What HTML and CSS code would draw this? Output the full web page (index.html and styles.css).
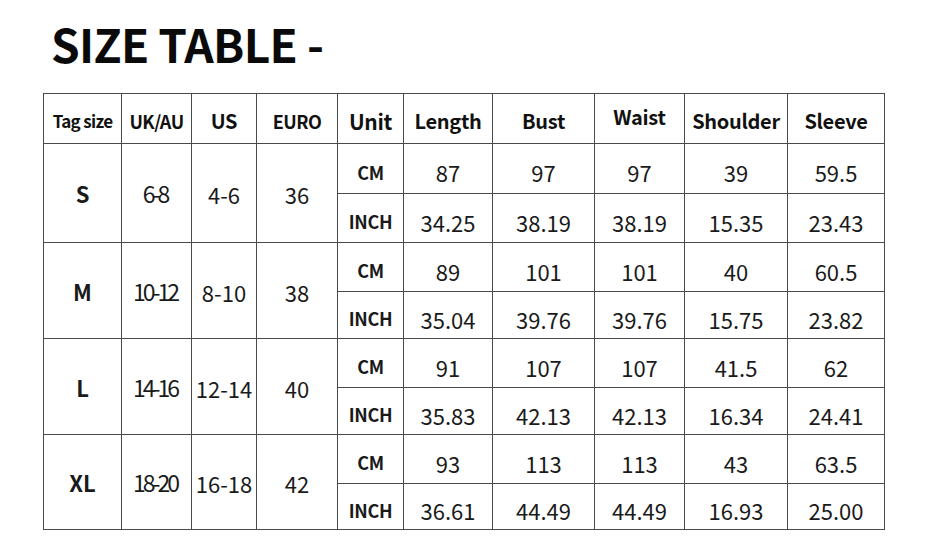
FILE: index.html
```html
<!DOCTYPE html>
<html>
<head>
<meta charset="utf-8">
<link rel="stylesheet" href="styles.css">
</head>
<body>
<h1 class="title">SIZE TABLE -</h1>
<table class="size-table">
  <colgroup>
    <col class="c-tag"><col class="c-uk"><col class="c-us"><col class="c-euro"><col class="c-unit">
    <col class="c-len"><col class="c-bust"><col class="c-waist"><col class="c-sh"><col class="c-sl">
  </colgroup>
  <thead>
    <tr class="r-head">
      <th class="h-tag">Tag size</th>
      <th class="h-sm">UK/AU</th>
      <th>US</th>
      <th class="h-sm">EURO</th>
      <th class="h-unit">Unit</th>
      <th>Length</th>
      <th>Bust</th>
      <th class="h-up">Waist</th>
      <th>Shoulder</th>
      <th>Sleeve</th>
    </tr>
  </thead>
  <tbody>
    <tr class="r1">
      <td rowspan="2" class="size">S</td>
      <td rowspan="2" class="uk">6-8</td>
      <td rowspan="2" class="mid">4-6</td>
      <td rowspan="2" class="mid">36</td>
      <td class="unit">CM</td>
      <td>87</td><td>97</td><td>97</td><td>39</td><td>59.5</td>
    </tr>
    <tr class="r2">
      <td class="unit">INCH</td>
      <td>34.25</td><td>38.19</td><td>38.19</td><td>15.35</td><td>23.43</td>
    </tr>
    <tr class="r3">
      <td rowspan="2" class="size">M</td>
      <td rowspan="2" class="uk">10-12</td>
      <td rowspan="2" class="mid">8-10</td>
      <td rowspan="2" class="mid">38</td>
      <td class="unit">CM</td>
      <td>89</td><td>101</td><td>101</td><td>40</td><td>60.5</td>
    </tr>
    <tr class="r4">
      <td class="unit">INCH</td>
      <td>35.04</td><td>39.76</td><td>39.76</td><td>15.75</td><td>23.82</td>
    </tr>
    <tr class="r3">
      <td rowspan="2" class="size">L</td>
      <td rowspan="2" class="uk">14-16</td>
      <td rowspan="2" class="mid">12-14</td>
      <td rowspan="2" class="mid">40</td>
      <td class="unit">CM</td>
      <td>91</td><td>107</td><td>107</td><td>41.5</td><td>62</td>
    </tr>
    <tr class="r4">
      <td class="unit">INCH</td>
      <td>35.83</td><td>42.13</td><td>42.13</td><td>16.34</td><td>24.41</td>
    </tr>
    <tr class="r3">
      <td rowspan="2" class="size">XL</td>
      <td rowspan="2" class="uk">18-20</td>
      <td rowspan="2" class="mid">16-18</td>
      <td rowspan="2" class="mid">42</td>
      <td class="unit">CM</td>
      <td>93</td><td>113</td><td>113</td><td>43</td><td>63.5</td>
    </tr>
    <tr class="r5">
      <td class="unit">INCH</td>
      <td>36.61</td><td>44.49</td><td>44.49</td><td>16.93</td><td>25.00</td>
    </tr>
  </tbody>
</table>
</body>
</html>
```
FILE: styles.css
```css
html, body {
  margin: 0;
  padding: 0;
  background: #ffffff;
}
body {
  width: 938px;
  height: 550px;
  overflow: hidden;
  font-family: "Noto Sans CJK SC", "Noto Sans", sans-serif;
  color: #111;
}
.title {
  margin: 0;
  padding: 18px 0 0 51px;
  height: 75px;
  box-sizing: border-box;
  font-size: 46px;
  line-height: 50px;
  font-weight: 700;
  color: #0a0a0a;
  letter-spacing: -0.7px;
}
.size-table {
  margin: 18px 0 0 43px;
  border-collapse: collapse;
  table-layout: fixed;
  width: 841px;
}
.c-tag { width: 78px; }
.c-uk { width: 70px; }
.c-us { width: 65px; }
.c-euro { width: 81px; }
.c-unit { width: 66px; }
.c-len { width: 89px; }
.c-bust { width: 102px; }
.c-waist { width: 90px; }
.c-sh { width: 103px; }
.c-sl { width: 97px; }

.size-table th,
.size-table td {
  border: 1px solid #4a4a4a;
  padding: 0;
  text-align: center;
  vertical-align: middle;
  white-space: nowrap;
}
.size-table th {
  font-size: 20px;
  font-weight: 700;
  color: #111;
  padding-top: 4px;
  letter-spacing: -0.3px;
}
.size-table th.h-tag {
  font-size: 17px;
  letter-spacing: -0.7px;
}
.size-table th.h-sm {
  font-size: 18px;
  letter-spacing: -0.5px;
}
.size-table th.h-unit {
  font-size: 21px;
}
.size-table th.h-up {
  padding-top: 0;
  padding-bottom: 4px;
}
.size-table td {
  font-size: 22px;
  font-weight: 400;
  color: #1a1a1a;
  padding-top: 7px;
}
.size-table td.size {
  font-size: 22px;
  font-weight: 700;
  padding-top: 0;
}
.size-table td.uk {
  font-size: 23px;
  letter-spacing: -3px;
  padding-top: 0;
  padding-right: 3px;
}
.size-table td.mid {
  padding-top: 2px;
}
.size-table td.unit {
  font-size: 18px;
  font-weight: 700;
  padding-top: 6px;
  border-left-color: #8a8a8a;
  letter-spacing: -0.3px;
}
.r-head { height: 50px; }
.r1 { height: 50px; }
.r2 { height: 49px; }
.r3 { height: 49px; }
.r4 { height: 47px; }
.r5 { height: 46px; }
```
